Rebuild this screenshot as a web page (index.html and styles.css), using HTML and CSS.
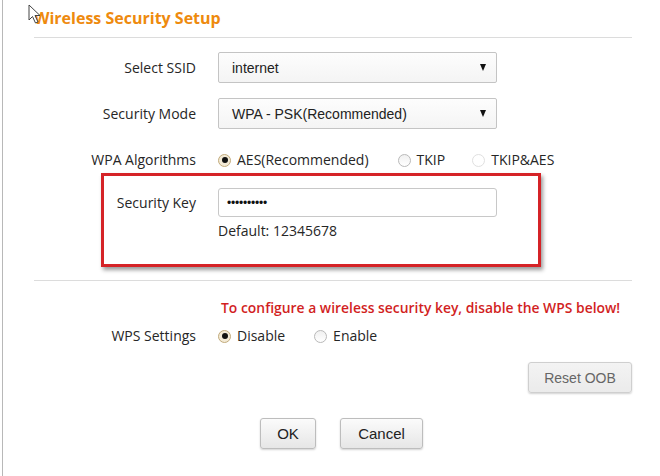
FILE: index.html
```html
<!DOCTYPE html>
<html>
<head>
<meta charset="utf-8">
<link rel="stylesheet" href="styles.css">
</head>
<body>
<div class="panel">
  <svg class="cursor" width="14" height="20" viewBox="0 0 14 20"><path d="M1 1 L1 16 L4.5 12.5 L7.5 19 L10 18 L7 11.5 L12 11.5 Z" fill="#fff" stroke="#444" stroke-width="1" stroke-linejoin="round"/></svg>
  <h1 class="title">Wireless Security Setup</h1>
  <div class="rule"></div>

  <div class="row row-ssid">
    <div class="label">Select SSID</div>
    <div class="select"><span>internet</span><span class="arrow"></span></div>
  </div>

  <div class="row row-mode">
    <div class="label">Security Mode</div>
    <div class="select"><span>WPA - PSK(Recommended)</span><span class="arrow"></span></div>
  </div>

  <div class="row row-algo">
    <div class="label">WPA Algorithms</div>
    <div class="radios">
      <span class="radio checked"></span><span class="rtext">AES(Recommended)</span>
      <span class="radio gap1"></span><span class="rtext">TKIP</span>
      <span class="radio faint gap2"></span><span class="rtext">TKIP&amp;AES</span>
    </div>
  </div>

  <div class="keybox">
    <div class="row row-key">
      <div class="label">Security Key</div>
      <div class="field">
        <div class="input"><span class="dots">••••••••••</span></div>
        <div class="hint">Default: 12345678</div>
      </div>
    </div>
  </div>

  <div class="rule rule2"></div>

  <div class="warn">To configure a wireless security key, disable the WPS below!</div>

  <div class="row row-wps">
    <div class="label">WPS Settings</div>
    <div class="radios">
      <span class="radio checked"></span><span class="rtext">Disable</span>
      <span class="radio gap3"></span><span class="rtext">Enable</span>
    </div>
  </div>

  <div class="reset-line"><button class="btn btn-reset">Reset OOB</button></div>

  <div class="actions">
    <button class="btn btn-ok">OK</button>
    <button class="btn btn-cancel">Cancel</button>
  </div>
</div>
</body>
</html>
```

FILE: styles.css
```css
* { box-sizing: border-box; }
html, body { margin: 0; padding: 0; background: #fff; }
body {
  font-family: "Open Sans", "Noto Sans", sans-serif;
  font-size: 14px;
  font-weight: 500;
  color: #262626;
}
.panel {
  position: relative;
  margin-left: 2px;
  border-left: 1px solid #b8b8b8;
  height: 476px;
  overflow: hidden;
}
.cursor {
  position: absolute;
  left: 25px;
  top: 4px;
}
.title {
  margin: 0;
  padding: 8px 0 0 31px;
  font-size: 16px;
  line-height: 20px;
  font-weight: 700;
  color: #ee8a0e;
}
.rule {
  margin: 9px 0 0 31px;
  width: 598px;
  height: 1px;
  background: #dcdcdc;
}
.row {
  display: grid;
  grid-template-columns: 193px 1fr;
  column-gap: 22px;
  align-items: center;
}
.label {
  text-align: right;
  line-height: 20px;
}
.row-ssid { margin-top: 14px; }
.row-mode { margin-top: 15px; }
.select {
  width: 279px;
  height: 31px;
  border: 1px solid #c4c4c4;
  border-radius: 2px;
  background: linear-gradient(#fdfdfd, #f4f4f4);
  display: flex;
  align-items: center;
  justify-content: space-between;
  padding: 0 10px 0 13px;
  font-family: "Liberation Sans", Arial, sans-serif;
  font-weight: 400;
  font-size: 14px;
  color: #222;
}
.arrow {
  width: 0;
  height: 0;
  border-left: 3.5px solid transparent;
  border-right: 3.5px solid transparent;
  border-top: 7px solid #111;
}
.row-algo { margin-top: 21px; }
.radios {
  display: flex;
  align-items: center;
  line-height: 20px;
}
.radio {
  width: 13px;
  height: 13px;
  border-radius: 50%;
  border: 1px solid #b9b9b9;
  background: linear-gradient(#f0f0f0, #fff);
  margin-right: 6px;
  position: relative;
  flex: none;
}
.radio.faint { border-color: #e0e0e0; background: #fff; }
.radio.checked {
  border: 1px solid #c2ab7c;
  background: #f3ead6;
}
.radio.checked::after {
  content: "";
  position: absolute;
  left: 2.5px;
  top: 2.5px;
  width: 6px;
  height: 6px;
  border-radius: 50%;
  background: #111;
}
.gap1 { margin-left: 29px; }
.gap2 { margin-left: 27px; }
.gap3 { margin-left: 29px; }

.keybox {
  margin: 3px 0 0 98px;
  width: 440px;
  border: 3px solid #d52327;
  padding: 12px 0 25px 0;
  box-shadow: 2px 3px 4px rgba(0,0,0,0.4);
}
.keybox .row { grid-template-columns: 92px 1fr; align-items: start; }
.row-key .label { padding-top: 5px; }
.input {
  width: 279px;
  height: 29px;
  border: 1px solid #c8c8c8;
  border-radius: 3px;
  display: flex;
  align-items: center;
  padding-left: 8px;
}
.dots {
  font-family: "Liberation Sans", Arial, sans-serif;
  font-size: 12px;
  letter-spacing: -0.2px;
  color: #111;
}
.hint {
  margin-top: 6px;
  line-height: 16px;
}
.rule2 { margin-top: 13px; }
.warn {
  margin: 19px 0 0 218px;
  line-height: 16px;
  font-size: 13.9px;
  font-weight: 600;
  color: #d21f1f;
  white-space: nowrap;
}
.row-wps { margin-top: 10px; }
.reset-line {
  display: flex;
  justify-content: flex-end;
  width: 629px;
  margin-top: 16px;
}
.btn {
  height: 31px;
  border: 1px solid #bdbdbd;
  border-radius: 3px;
  background: linear-gradient(#fbfbfb, #e6e6e6);
  box-shadow: 0 1px 2px rgba(0,0,0,0.18);
  font-family: "Liberation Sans", Arial, sans-serif;
  font-size: 15px;
  color: #222;
  padding: 0;
}
.btn-reset {
  width: 104px;
  background: linear-gradient(#f3f3f3, #ebebeb);
  color: #666;
  font-size: 14px;
  border-color: #cfcfcf;
}
.actions {
  display: flex;
  gap: 24px;
  margin: 25px 0 0 257px;
}
.btn-ok { width: 56px; }
.btn-cancel { width: 83px; }
```
